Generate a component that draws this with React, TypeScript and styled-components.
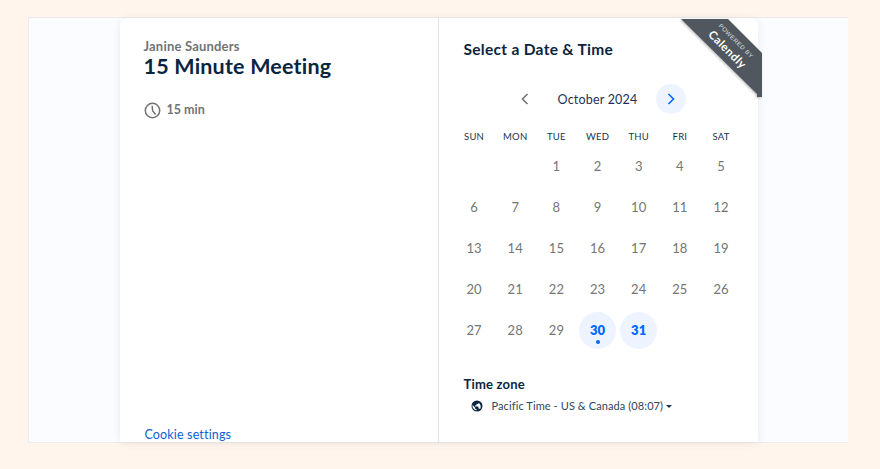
import React from "react";
import styled, { createGlobalStyle } from "styled-components";

const Global = createGlobalStyle`
  html, body { margin: 0; padding: 0; height: 100%; background: #fff5ec; }
  body { font-family: Lato, "Liberation Sans", sans-serif; overflow: hidden; }
  #root { height: 469px; padding: 17px 32px 26px 28px; box-sizing: border-box; }
`;

const Frame = styled.div`
  height: 426px;
  box-sizing: border-box;
  background: #fafcff;
  border: 1px solid #ececec;
  border-right: none;
  display: flex;
  justify-content: center;
  padding-left: 1px;
`;

const Card = styled.div`
  position: relative;
  width: 638px;
  margin-left: -1px;
  background: #fff;
  border-radius: 8px 8px 0 0;
  box-shadow: 0 1px 8px rgba(0, 0, 0, 0.08);
  display: grid;
  grid-template-columns: 319px 1fr;
`;

const Side = styled.section`
  border-right: 1px solid #e6e6e6;
  padding: 21px 24px 0 24px;
  display: flex;
  flex-direction: column;
  min-height: 0;
`;

const Host = styled.div`
  font-size: 13px;
  line-height: 15px;
  font-weight: 700;
  color: #737373;
  letter-spacing: 0.2px;
`;

const Title = styled.h1`
  margin: 0;
  font-size: 21.5px;
  line-height: 24px;
  font-weight: 700;
  color: #0a2540;
  letter-spacing: 0.2px;
`;

const Duration = styled.div`
  margin-top: 23px;
  display: flex;
  align-items: center;
  gap: 6px;
  font-size: 12.5px;
  font-weight: 700;
  color: #737373;
  line-height: 18px;
`;

const Cookie = styled.a`
  margin-top: auto;
  margin-bottom: -1px;
  padding-left: 1px;
  font-size: 12.5px;
  line-height: 16px;
  color: #0b62d0;
  letter-spacing: 0.15px;
`;

const Main = styled.section`
  padding: 21px 0 0 25px;
  display: flex;
  flex-direction: column;
`;

const Heading = styled.h2`
  margin: 0;
  font-size: 15.5px;
  line-height: 20px;
  font-weight: 700;
  color: #0a2540;
  letter-spacing: 0.3px;
`;

const MonthBar = styled.div`
  margin-top: 25px;
  width: 222px;
  height: 30px;
  padding-left: 46px;
  display: flex;
  align-items: center;
  color: #0a2540;
`;

const MonthLabel = styled.div`
  width: 116px;
  text-align: center;
  font-size: 12.5px;
  letter-spacing: 0.2px;
  color: #1a3352;
`;

const NavButton = styled.button<{ $active?: boolean }>`
  width: 30px;
  height: 30px;
  padding: 0;
  border: none;
  border-radius: 50%;
  display: flex;
  flex: none;
  align-items: center;
  justify-content: center;
  background: ${(p) => (p.$active ? "#edf4ff" : "transparent")};
  color: ${(p) => (p.$active ? "#0069ff" : "#737373")};
`;

const Weekdays = styled.div`
  display: grid;
  grid-template-columns: repeat(7, 41.17px);
  margin-left: -10px;
  margin-top: 16px;
  height: 14px;
`;

const Weekday = styled.div`
  text-align: center;
  font-size: 9.5px;
  line-height: 14px;
  letter-spacing: 0.2px;
  color: #1a3352;
`;

const Days = styled.div`
  display: grid;
  grid-template-columns: repeat(7, 41.17px);
  grid-auto-rows: 41.2px;
  margin-left: -10px;
  margin-top: 1px;
`;

const DayCell = styled.div`
  display: flex;
  align-items: center;
  justify-content: center;
`;

const Day = styled.div<{ $open?: boolean }>`
  position: relative;
  width: 37px;
  height: 37px;
  border-radius: 50%;
  display: flex;
  align-items: center;
  justify-content: center;
  font-size: 13px;
  letter-spacing: 0.1px;
  font-weight: ${(p) => (p.$open ? 800 : 400)};
  color: ${(p) => (p.$open ? "#0069ff" : "#757575")};
  background: ${(p) => (p.$open ? "#edf4ff" : "transparent")};
`;

const Dot = styled.span`
  position: absolute;
  left: 50%;
  bottom: 5px;
  width: 4px;
  height: 4px;
  margin-left: -2px;
  border-radius: 50%;
  background: #0069ff;
`;

const ZoneLabel = styled.div`
  margin-top: 25px;
  font-size: 13px;
  line-height: 16px;
  font-weight: 700;
  color: #0a2540;
  letter-spacing: 0.2px;
`;

const ZoneRow = styled.div`
  margin-top: 6px;
  padding-left: 7px;
  display: flex;
  align-items: center;
  font-size: 11px;
  line-height: 16px;
  color: #2f4560;
  letter-spacing: 0.1px;
`;

const ZoneText = styled.span`
  margin-left: 9px;
`;

const Caret = styled.span`
  margin-left: 3px;
  margin-top: 2px;
  width: 0;
  height: 0;
  border-left: 3px solid transparent;
  border-right: 3px solid transparent;
  border-top: 3px solid #1a3352;
`;

const Ribbon = styled.svg`
  position: absolute;
  top: 1px;
  right: -4px;
  width: 81px;
  height: 78px;
  filter: drop-shadow(-1px 1px 1px rgba(0, 0, 0, 0.25));
`;

const RibbonText = styled.div`
  position: absolute;
  top: 17px;
  right: -18px;
  width: 90px;
  text-align: center;
  transform: rotate(45deg);
  color: #fff;
`;

const Powered = styled.div`
  font-size: 6px;
  line-height: 9px;
  letter-spacing: 0.55px;
  font-family: "Liberation Sans", sans-serif;
  color: #dfe1e3;
`;

const Brand = styled.div`
  font-size: 11.5px;
  line-height: 13px;
  font-weight: 700;
  letter-spacing: 0.5px;
`;

const weekdays = ["SUN", "MON", "TUE", "WED", "THU", "FRI", "SAT"];
const blanks = [0, 1];
const dates = Array.from({ length: 31 }, (_, i) => i + 1);

export default function App() {
  return (
    <>
      <Global />
      <Frame>
        <Card>
          <Side>
            <Host>Janine Saunders</Host>
            <Title>15 Minute Meeting</Title>
            <Duration>
              <svg width="17" height="17" viewBox="0 0 17 17" fill="none" stroke="#737373" strokeWidth="1.5" strokeLinecap="round">
                <circle cx="8.5" cy="8.5" r="7.2" />
                <path d="M8.2 4.2 L8.6 8.6 L11.2 12" />
              </svg>
              15 min
            </Duration>
            <Cookie>Cookie settings</Cookie>
          </Side>
          <Main>
            <Heading>Select a Date &amp; Time</Heading>
            <MonthBar>
              <NavButton aria-label="Previous month">
                <svg width="10" height="12" viewBox="0 0 10 12" fill="none" stroke="currentColor" strokeWidth="1.6">
                  <path d="M7.5 1 L2.5 6 L7.5 11" />
                </svg>
              </NavButton>
              <MonthLabel>October 2024</MonthLabel>
              <NavButton $active aria-label="Next month">
                <svg width="10" height="12" viewBox="0 0 10 12" fill="none" stroke="currentColor" strokeWidth="1.6">
                  <path d="M2.5 1 L7.5 6 L2.5 11" />
                </svg>
              </NavButton>
            </MonthBar>
            <Weekdays>
              {weekdays.map((d) => (
                <Weekday key={d}>{d}</Weekday>
              ))}
            </Weekdays>
            <Days>
              {blanks.map((b) => (
                <DayCell key={`b${b}`} />
              ))}
              {dates.map((d) => (
                <DayCell key={d}>
                  <Day $open={d >= 30}>
                    {d}
                    {d === 30 && <Dot />}
                  </Day>
                </DayCell>
              ))}
            </Days>
            <ZoneLabel>Time zone</ZoneLabel>
            <ZoneRow>
              <svg width="12" height="12" viewBox="0 0 24 24" fill="#0a2540">
                <path d="M12 1a11 11 0 1 0 0 22 11 11 0 0 0 0-22Zm-1 19.9A9 9 0 0 1 3.2 10L8 15v1c0 1.1.9 2 2 2h1v2.9Zm6.9-2.5A2 2 0 0 0 16 17h-1v-3c0-.55-.45-1-1-1H8v-2h2c.55 0 1-.45 1-1V8h2c1.1 0 2-.9 2-2v-.4a9 9 0 0 1 2.9 12.8Z" />
              </svg>
              <ZoneText>Pacific Time - US &amp; Canada (08:07)</ZoneText>
              <Caret />
            </ZoneRow>
          </Main>
          <Ribbon viewBox="0 0 81 78" aria-hidden="true">
            <polygon points="0,0 47,0 81,34 81,78 76,78 76,75" fill="#50575e" />
          </Ribbon>
          <RibbonText>
            <Powered>POWERED BY</Powered>
            <Brand>Calendly</Brand>
          </RibbonText>
        </Card>
      </Frame>
    </>
  );
}
